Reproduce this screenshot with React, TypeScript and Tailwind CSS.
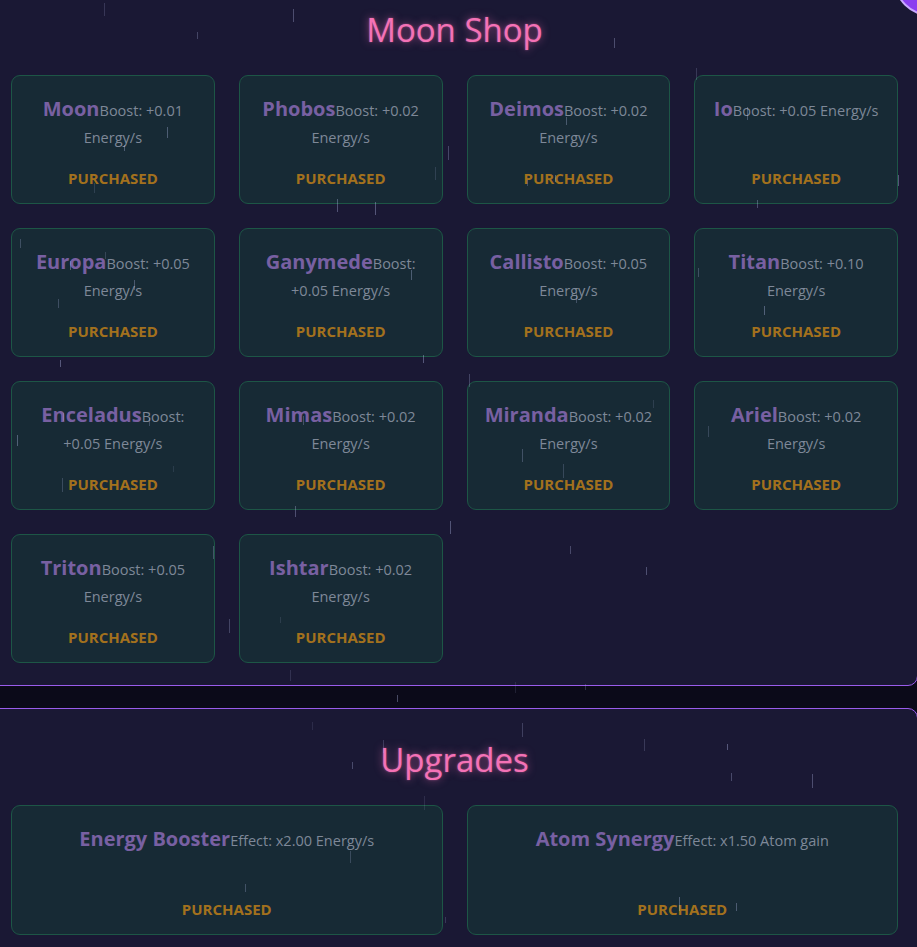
import React from "react";

const moons: [string, string][] = [
  ["Moon", "+0.01"],
  ["Phobos", "+0.02"],
  ["Deimos", "+0.02"],
  ["Io", "+0.05"],
  ["Europa", "+0.05"],
  ["Ganymede", "+0.05"],
  ["Callisto", "+0.05"],
  ["Titan", "+0.10"],
  ["Enceladus", "+0.05"],
  ["Mimas", "+0.02"],
  ["Miranda", "+0.02"],
  ["Ariel", "+0.02"],
  ["Triton", "+0.05"],
  ["Ishtar", "+0.02"],
];

const upgrades: [string, string][] = [
  ["Energy Booster", "Effect: x2.00 Energy/s"],
  ["Atom Synergy", "Effect: x1.50 Atom gain"],
];

function rand(seed: number) {
  let s = seed;
  return () => {
    s = (s * 9301 + 49297) % 233280;
    return s / 233280;
  };
}

const r = rand(42);
const streaks = Array.from({ length: 65 }, () => ({
  x: Math.floor(r() * 917),
  y: Math.floor(r() * 947),
  h: 6 + Math.floor(r() * 9),
  o: 0.1 + r() * 0.25,
}));

function Card({ name, desc, tall }: { name: string; desc: string; tall?: boolean }) {
  return (
    <div
      className={`flex flex-col justify-between rounded-[9px] border border-[#1d5646] bg-[#172a35] px-4 pt-[21px] pb-[15px] text-center ${
        tall ? "h-[130px]" : "h-[129px]"
      }`}
    >
      <p className="text-[14.5px] leading-[27px] text-[#7e8898]">
        <span className="inline-block text-[20px] font-bold leading-[20px] text-[#7860a2]">{name}</span>
        {desc}
      </p>
      <div className="text-[15px] font-bold leading-[20px] text-[#a3711d]">PURCHASED</div>
    </div>
  );
}

function Title({ children }: { children: React.ReactNode }) {
  return (
    <h2
      className="mb-[25px] text-center text-[33px] leading-[40px] text-[#f472b6]"
      style={{ textShadow: "0 0 8px rgba(244,114,182,0.6), 0 0 2px rgba(244,114,182,0.5)" }}
    >
      {children}
    </h2>
  );
}

export default function App() {
  return (
    <div
      className="relative h-[947px] w-full overflow-hidden bg-[#0b0a19]"
      style={{ fontFamily: '"Open Sans", "Noto Sans", sans-serif' }}
    >
      <div className="-ml-[10px] -mt-[22px] w-[928px] rounded-[10px] border border-[#9a5cec] bg-[#1a1834] pl-5 pr-[19px] pt-[31px] pb-[22px]">
        <Title>Moon Shop</Title>
        <div className="grid grid-cols-4 gap-6">
          {moons.map(([n, b]) => (
            <Card key={n} name={n} desc={`Boost: ${b} Energy/s`} />
          ))}
        </div>
      </div>
      <div className="mt-[22px] -ml-[10px] w-[928px] rounded-[10px] border border-[#9a5cec] bg-[#1a1834] pl-5 pr-[19px] pt-[31px] pb-[21px]">
        <Title>Upgrades</Title>
        <div className="grid grid-cols-2 gap-6">
          {upgrades.map(([n, d]) => (
            <Card key={n} name={n} desc={d} tall />
          ))}
        </div>
      </div>
      {streaks.map((s, i) => (
        <div
          key={i}
          className="pointer-events-none absolute w-px bg-[#c8d0ff]"
          style={{ left: s.x, top: s.y, height: s.h, opacity: s.o }}
        />
      ))}
      <div className="absolute left-[894px] top-[-56px] h-[72px] w-[72px] rounded-full border-2 border-[#c9a8ff] bg-[#8a3ff0]" />
    </div>
  );
}
